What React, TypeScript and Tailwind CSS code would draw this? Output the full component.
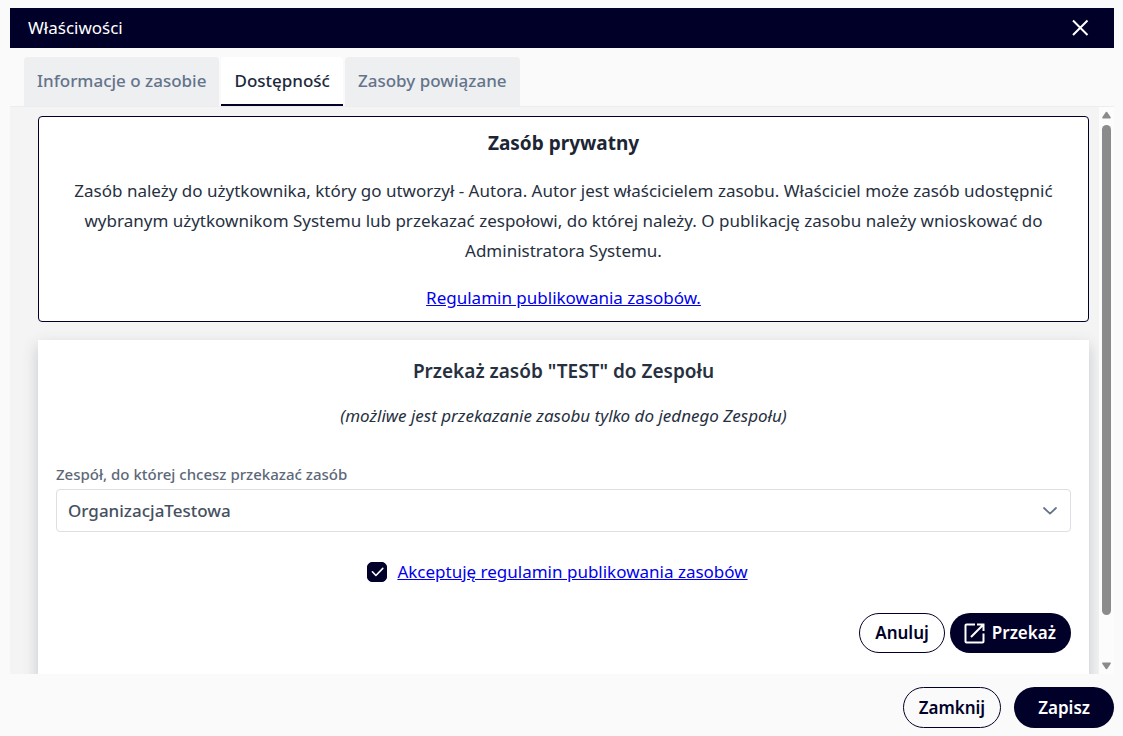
import { useState } from "react";

const tabs = ["Informacje o zasobie", "Dostępność", "Zasoby powiązane"];

function Scrollbar() {
  return (
    <div aria-hidden="true" className="flex w-[15px] shrink-0 flex-col items-center bg-[#fcfcfc] py-1">
      <svg viewBox="0 0 9 8" className="h-2 w-[9px] fill-[#8b8b8b]">
        <path d="M4.5 0.8c.4 0 .7.2 1 .6L8.700 6.300c.3.6 0 1.200-.6 1.200H.9c-.6 0-.9-.6-.6-1.200L3.500 1.400c.3-.4.6-.6 1-.6Z" />
      </svg>
      <div className="mt-1.5 w-[9px] grow-[490] rounded-full bg-[#8b8b8b]" />
      <div className="grow-[47]" />
      <svg viewBox="0 0 9 8" className="h-2 w-[9px] fill-[#8b8b8b]">
        <path d="M4.5 7.200c-.4 0-.7-.2-1-.6L.3 1.700C0 1.100.3.5.9.5h7.200c.6 0 .9.6.6 1.200L5.500 6.600c-.3.4-.6.6-1 .6Z" />
      </svg>
    </div>
  );
}

function PrivateInfo() {
  return (
    <section className="rounded border border-[#000028] bg-white px-6 pt-[11px] pb-2 text-center">
      <h2 className="text-[19px] leading-[30px] font-bold text-[#1c2534]">Zasób prywatny</h2>
      <p className="mt-[18px] leading-[30px]">
        Zasób należy do użytkownika, który go utworzył - Autora. Autor jest właścicielem zasobu.
        Właściciel może zasób udostępnić wybranym użytkownikom Systemu lub przekazać zespołowi, do
        której należy. O publikację zasobu należy wnioskować do Administratora Systemu.
      </p>
      <p className="mt-[17px] leading-[30px]">
        <a href="#regulamin" className="text-[#0000ee] underline">
          Regulamin publikowania zasobów.
        </a>
      </p>
    </section>
  );
}

function TransferForm() {
  const [accepted, setAccepted] = useState(true);

  return (
    <section className="bg-white px-[18px] pt-4 pb-12 shadow-[0_6px_14px_rgba(60,72,90,0.25)]">
      <h2 className="text-center text-[19px] leading-[30px] font-semibold">
        Przekaż zasób "TEST" do Zespołu
      </h2>
      <p className="mt-[15px] text-center leading-[30px] italic">
        (możliwe jest przekazanie zasobu tylko do jednego Zespołu)
      </p>

      <label htmlFor="team" className="mt-[31px] block text-[15px] leading-6 font-medium text-[#5c6878]">
        Zespół, do której chcesz przekazać zasób
      </label>
      <div className="relative mt-[3px]">
        <select
          id="team"
          className="block h-[43px] w-full appearance-none rounded border border-[#dcdfe3] bg-white px-[11px] font-medium text-[#465060]"
        >
          <option>OrganizacjaTestowa</option>
        </select>
        <svg
          viewBox="0 0 14 8"
          className="pointer-events-none absolute top-[18px] right-3.5 h-2 w-3.5 fill-none stroke-[#64748b] stroke-[1.8]"
        >
          <path d="M1 1l6 5.600L13 1" strokeLinecap="round" strokeLinejoin="round" />
        </svg>
      </div>

      <div className="mt-[25px] flex items-center justify-center gap-2.5 pr-3 leading-[30px]">
        <span className="relative flex">
          <input
            id="accept"
            type="checkbox"
            checked={accepted}
            onChange={(e) => setAccepted(e.target.checked)}
            aria-labelledby="accept-label"
            className="size-5 appearance-none rounded-[5px] border border-[#000028] bg-white checked:bg-[#000028]"
          />
          {accepted && (
            <svg
              viewBox="0 0 20 20"
              className="pointer-events-none absolute inset-0 size-5 fill-none stroke-white stroke-[1.6]"
            >
              <path d="M5.400 9.800l3.500 3.700 6.900-7.100" strokeLinecap="round" strokeLinejoin="round" />
            </svg>
          )}
        </span>
        <a id="accept-label" href="#regulamin" className="text-[#0000ee] underline">
          Akceptuję regulamin publikowania zasobów
        </a>
      </div>

      <div className="mt-[26px] flex justify-end gap-[5px] font-semibold">
        <button type="button" className="h-10 rounded-full border border-[#000028] px-[15px] text-[#000028]">
          Anuluj
        </button>
        <button
          type="button"
          className="flex h-10 items-center gap-[7px] rounded-full bg-[#000028] pr-[15px] pl-3.5 text-white"
        >
          <svg viewBox="0 0 21 21" className="size-[21px] fill-none stroke-white stroke-2">
            <path d="M11 1.500H2.500a1 1 0 0 0-1 1v16a1 1 0 0 0 1 1h16a1 1 0 0 0 1-1V10.500M13 1.500h6.500V8M19.200 1.800L7 14" />
          </svg>
          Przekaż
        </button>
      </div>
    </section>
  );
}

export default function App() {
  const [active, setActive] = useState(1);

  return (
    <div className="flex h-screen flex-col bg-[#fafafa] pt-2 pr-[9px] pb-2 pl-2.5 font-['Noto_Sans','Open_Sans',sans-serif] text-[17px] text-[#27303f]">
      <header className="flex h-10 shrink-0 items-center justify-between bg-[#000028] pr-6 pl-[18px] text-white">
        <h1>Właściwości</h1>
        <button type="button" aria-label="Zamknij okno" className="flex">
          <svg viewBox="0 0 20 20" className="size-5 fill-none stroke-white stroke-2">
            <path d="M3 2.500l14.500 14.500M17.500 2.500L3 17" />
          </svg>
        </button>
      </header>

      <div role="tablist" className="mt-[9px] flex shrink-0 gap-0.5 border-b border-[#ededee] pl-3.5">
        {tabs.map((tab, i) => (
          <button
            key={tab}
            type="button"
            role="tab"
            aria-selected={active === i}
            onClick={() => setActive(i)}
            className={`h-[49px] rounded-t border-b-2 px-[13px] font-medium ${
              active === i
                ? "border-[#000028] bg-white text-[#1e293b]"
                : "border-[#eeeff1] bg-[#eeeff1] text-[#64748b]"
            }`}
          >
            {tab}
          </button>
        ))}
      </div>

      <main className="flex min-h-0 flex-1">
        <div className="flex min-w-0 flex-1 flex-col gap-[18px] overflow-hidden bg-[#f4f4f4] pt-[9px] pr-2.5 pl-7">
          <PrivateInfo />
          <TransferForm />
        </div>
        <Scrollbar />
      </main>

      <footer className="mt-[13px] flex shrink-0 justify-end gap-[13px] font-semibold">
        <button type="button" className="h-[41px] rounded-full border border-[#000028] px-[15px] text-[#000028]">
          Zamknij
        </button>
        <button type="button" className="h-[41px] rounded-full bg-[#000028] px-6 text-white">
          Zapisz
        </button>
      </footer>
    </div>
  );
}
